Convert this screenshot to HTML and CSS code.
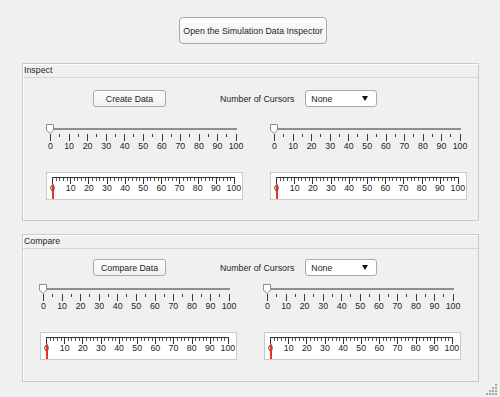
FILE: index.html
```html
<!DOCTYPE html>
<html lang="en">
<head>
    <meta charset="UTF-8">
    <title>Simulation Data Inspector Cursors</title>
    <link rel="stylesheet" href="styles.css">
</head>
<body>
    <div class="app">
        <!-- Top button -->
        <div class="top">
            <button class="btn btn-main">Open the Simulation Data Inspector</button>
        </div>

        <!-- Inspect panel -->
        <section class="panel panel-inspect">
            <div class="panel-title">Inspect</div>
            <div class="panel-body">
                <div class="controls">
                    <button class="btn btn-small">Create Data</button>
                    <span class="ctl-label">Number of Cursors</span>
                    <div class="select"><span>None</span><i class="caret"></i></div>
                </div>
                <div class="views">
                    <div class="view">
                        <div class="slider">
                            <div class="rail"><div class="track"></div><svg class="thumb" width="9" height="10" viewBox="0 0 9 10"><path d="M0.5 0.5H7.5V6L4 9.5L0.5 6Z" fill="#fff" stroke="#8a8a8a"/></svg></div>
                            <div class="slider-ticks"></div>
                            <div class="labels"><span>0</span><span>10</span><span>20</span><span>30</span><span>40</span><span>50</span><span>60</span><span>70</span><span>80</span><span>90</span><span>100</span></div>
                        </div>
                        <div class="gauge">
                            <div class="gauge-ticks"></div>
                            <div class="labels gauge-labels"><span>0</span><span>10</span><span>20</span><span>30</span><span>40</span><span>50</span><span>60</span><span>70</span><span>80</span><span>90</span><span>100</span></div>
                            <div class="needle"></div>
                        </div>
                    </div>
                    <div class="view">
                        <div class="slider">
                            <div class="rail"><div class="track"></div><svg class="thumb" width="9" height="10" viewBox="0 0 9 10"><path d="M0.5 0.5H7.5V6L4 9.5L0.5 6Z" fill="#fff" stroke="#8a8a8a"/></svg></div>
                            <div class="slider-ticks"></div>
                            <div class="labels"><span>0</span><span>10</span><span>20</span><span>30</span><span>40</span><span>50</span><span>60</span><span>70</span><span>80</span><span>90</span><span>100</span></div>
                        </div>
                        <div class="gauge">
                            <div class="gauge-ticks"></div>
                            <div class="labels gauge-labels"><span>0</span><span>10</span><span>20</span><span>30</span><span>40</span><span>50</span><span>60</span><span>70</span><span>80</span><span>90</span><span>100</span></div>
                            <div class="needle"></div>
                        </div>
                    </div>
                </div>
            </div>
        </section>

        <!-- Compare panel -->
        <section class="panel panel-compare">
            <div class="panel-title">Compare</div>
            <div class="panel-body">
                <div class="controls">
                    <button class="btn btn-small">Compare Data</button>
                    <span class="ctl-label">Number of Cursors</span>
                    <div class="select"><span>None</span><i class="caret"></i></div>
                </div>
                <div class="views">
                    <div class="view">
                        <div class="slider">
                            <div class="rail"><div class="track"></div><svg class="thumb" width="9" height="10" viewBox="0 0 9 10"><path d="M0.5 0.5H7.5V6L4 9.5L0.5 6Z" fill="#fff" stroke="#8a8a8a"/></svg></div>
                            <div class="slider-ticks"></div>
                            <div class="labels"><span>0</span><span>10</span><span>20</span><span>30</span><span>40</span><span>50</span><span>60</span><span>70</span><span>80</span><span>90</span><span>100</span></div>
                        </div>
                        <div class="gauge">
                            <div class="gauge-ticks"></div>
                            <div class="labels gauge-labels"><span>0</span><span>10</span><span>20</span><span>30</span><span>40</span><span>50</span><span>60</span><span>70</span><span>80</span><span>90</span><span>100</span></div>
                            <div class="needle"></div>
                        </div>
                    </div>
                    <div class="view">
                        <div class="slider">
                            <div class="rail"><div class="track"></div><svg class="thumb" width="9" height="10" viewBox="0 0 9 10"><path d="M0.5 0.5H7.5V6L4 9.5L0.5 6Z" fill="#fff" stroke="#8a8a8a"/></svg></div>
                            <div class="slider-ticks"></div>
                            <div class="labels"><span>0</span><span>10</span><span>20</span><span>30</span><span>40</span><span>50</span><span>60</span><span>70</span><span>80</span><span>90</span><span>100</span></div>
                        </div>
                        <div class="gauge">
                            <div class="gauge-ticks"></div>
                            <div class="labels gauge-labels"><span>0</span><span>10</span><span>20</span><span>30</span><span>40</span><span>50</span><span>60</span><span>70</span><span>80</span><span>90</span><span>100</span></div>
                            <div class="needle"></div>
                        </div>
                    </div>
                </div>
            </div>
        </section>
    </div>

    <!-- Window resize grip -->
    <svg class="grip" width="12" height="12" viewBox="0 0 12 12">
        <g fill="#a8a8a8">
            <rect x="9" y="1" width="2" height="2"/>
            <rect x="6" y="4" width="2" height="2"/><rect x="9" y="4" width="2" height="2"/>
            <rect x="3" y="7" width="2" height="2"/><rect x="6" y="7" width="2" height="2"/><rect x="9" y="7" width="2" height="2"/>
            <rect x="0" y="10" width="2" height="2"/><rect x="3" y="10" width="2" height="2"/><rect x="6" y="10" width="2" height="2"/><rect x="9" y="10" width="2" height="2"/>
        </g>
    </svg>
</body>
</html>
```

FILE: styles.css
```css
/* Reset */
* {
    margin: 0;
    padding: 0;
    box-sizing: border-box;
}

body {
    width: 500px;
    height: 397px;
    position: relative;
    overflow: hidden;
    background-color: #f0f0f0;
    font-family: "Liberation Sans", Arial, sans-serif;
    font-size: 8.8px;
    color: #1e1e1e;
}

.app {
    padding: 17px 21px 0 22px;
}

/* Buttons */
.top {
    padding-left: 157px;
}

.btn {
    font-family: inherit;
    font-size: 8.8px;
    color: #1e1e1e;
    background: linear-gradient(#fdfdfd, #f1f1f1);
    border: 1px solid #a9a9a9;
    border-radius: 4px;
}

.btn-main {
    width: 148px;
    height: 27px;
}

.btn-small {
    width: 73px;
    height: 17px;
    border-radius: 3px;
}

/* Panels */
.panel {
    border: 1px solid #cbcbcb;
    box-shadow: inset 1px 1px 0 #fff;
}

.panel-inspect {
    margin-top: 19px;
}

.panel-compare {
    margin-top: 13px;
}

.panel-title {
    height: 14px;
    line-height: 12px;
    padding-left: 1px;
    border-bottom: 1px solid #d6d6d6;
}

.panel-inspect .panel-body {
    padding: 12px 0 20px 23px;
}

.panel-compare .panel-body {
    padding: 10px 0 21px 17px;
}

.controls {
    display: flex;
    align-items: center;
    height: 17px;
}

.panel-inspect .controls {
    padding-left: 47px;
}

.panel-compare .controls {
    padding-left: 53px;
}

.ctl-label {
    margin-left: 54px;
}

.select {
    display: flex;
    align-items: center;
    justify-content: space-between;
    width: 72px;
    height: 17px;
    margin-left: 11px;
    padding: 0 8px 0 5px;
    background-color: #fff;
    border: 1px solid #a9a9a9;
    border-radius: 3px;
}

.caret {
    width: 0;
    height: 0;
    border-left: 3.5px solid transparent;
    border-right: 3.5px solid transparent;
    border-top: 5px solid #111;
}

/* Slider + gauge columns */
.views {
    display: flex;
    gap: 27px;
}

.view {
    width: 197px;
}

.slider {
    position: relative;
    width: 187px;
}

.panel-inspect .slider {
    margin: 17px 0 21px 4px;
}

.panel-compare .slider {
    margin: 8px 0 21px 3px;
}

.rail {
    height: 9px;
    display: flex;
    align-items: center;
    padding-left: 1px;
}

.track {
    flex: 1;
    height: 2px;
    background-color: #8e8e8e;
}

.thumb {
    position: absolute;
    left: -4px;
    top: 0;
}

.slider-ticks {
    margin-top: 1px;
    height: 7px;
    background:
        repeating-linear-gradient(90deg, #3a3a3a 0 1px, transparent 1px 18.6px) 0 0 / 100% 7px no-repeat,
        repeating-linear-gradient(90deg, #3a3a3a 0 1px, transparent 1px 18.6px) 9.3px 0 / 100% 3px no-repeat;
}

.labels {
    display: flex;
    justify-content: space-between;
    width: 186px;
    line-height: 10px;
    padding-left: 0.5px;
}

.labels span {
    width: 0;
    display: flex;
    justify-content: center;
    white-space: nowrap;
}

/* Linear gauge */
.gauge {
    position: relative;
    height: 28px;
    padding: 4px 0 0 5px;
    background-color: #fff;
    border: 1px solid #cacaca;
}

.gauge-ticks {
    width: 183px;
    height: 7px;
    border-top: 1px solid #333;
    background:
        repeating-linear-gradient(90deg, #333 0 1px, transparent 1px 18.2px) 0 0 / 100% 6px no-repeat,
        repeating-linear-gradient(90deg, #555 0 1px, transparent 1px 3.64px) 0 0 / 100% 3px no-repeat;
}

.gauge-labels {
    width: 182px;
    line-height: 9px;
}

.needle {
    position: absolute;
    left: 5px;
    top: 11px;
    bottom: 0;
    width: 2px;
    background-color: #e5322b;
    border-radius: 1px 1px 0 0;
}

/* Resize grip */
.grip {
    position: absolute;
    right: 2px;
    bottom: 2px;
}
```
